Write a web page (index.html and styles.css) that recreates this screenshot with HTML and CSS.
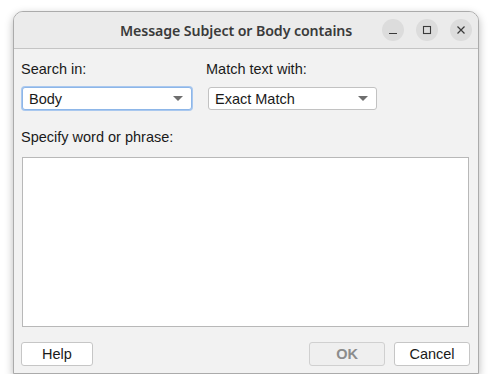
FILE: index.html
```html
<!DOCTYPE html>
<html lang="en">
<head>
  <meta charset="UTF-8"/>
  <meta name="viewport" content="width=device-width, initial-scale=1.0"/>
  <title>Message Subject or Body contains</title>
  <link rel="stylesheet" href="styles.css">
</head>
<body>
  <div class="window">
    <header class="titlebar">
      <span class="title">Message Subject or Body contains</span>
      <div class="wm-buttons">
        <button class="wm-btn" aria-label="Minimize">
          <svg width="10" height="10" viewBox="0 0 10 10"><path d="M1 8.5h8" stroke="#3a3a3a" stroke-width="1.2"/></svg>
        </button>
        <button class="wm-btn" aria-label="Maximize">
          <svg width="10" height="10" viewBox="0 0 10 10"><rect x="1.5" y="1.5" width="7" height="7" fill="none" stroke="#3a3a3a" stroke-width="1.1"/></svg>
        </button>
        <button class="wm-btn" aria-label="Close">
          <svg width="10" height="10" viewBox="0 0 10 10"><path d="M1.5 1.5l7 7M8.5 1.5l-7 7" stroke="#3a3a3a" stroke-width="1.2"/></svg>
        </button>
      </div>
    </header>

    <main class="content">
      <div class="row">
        <div class="field field-search">
          <label>Search in:</label>
          <div class="select focused"><span>Body</span><i class="arrow"></i></div>
        </div>
        <div class="field field-match">
          <label>Match text with:</label>
          <div class="select"><span>Exact Match</span><i class="arrow"></i></div>
        </div>
      </div>

      <label class="phrase-label">Specify word or phrase:</label>
      <textarea class="phrase"></textarea>

      <div class="buttons">
        <button class="btn btn-help">Help</button>
        <div class="spacer"></div>
        <button class="btn btn-ok" disabled>OK</button>
        <button class="btn btn-cancel">Cancel</button>
      </div>
    </main>
  </div>
</body>
</html>
```

FILE: styles.css
```css
*{box-sizing:border-box;margin:0;padding:0;}
body{background:#fff;padding:11px 0 0 13px;font-family:'Liberation Sans',Arial,sans-serif;font-size:14.5px;color:#1a1a1a;}
.window{width:466px;height:363px;background:#f2f2f2;border:1px solid #ababab;border-radius:10px 10px 0 0;box-shadow:0 3px 8px rgba(0,0,0,0.28);display:flex;flex-direction:column;overflow:hidden;}

.titlebar{height:37px;background:#ebebeb;border-bottom:1px solid #c4c4c4;display:flex;align-items:center;padding:0 6px 0 106px;flex-shrink:0;}
.title{font-family:'Noto Sans',sans-serif;font-weight:600;font-size:14.2px;color:#3a3a3a;letter-spacing:-0.1px;}
.wm-buttons{margin-left:auto;display:flex;gap:12px;}
.wm-btn{width:22px;height:22px;border-radius:50%;border:none;background:#dcdcdc;display:flex;align-items:center;justify-content:center;}

.content{padding:12px 7px 0 7px;display:flex;flex-direction:column;flex:1;}
.row{display:flex;}
.field{display:flex;flex-direction:column;}
.field label{line-height:16px;}
.field-search{width:185px;}
.select{margin-top:10px;height:23px;background:#fff;border:1px solid #c2c2c2;border-radius:3px;display:flex;align-items:center;padding:0 8px 0 6px;font-size:14.5px;}
.select span{flex:1;}
.field-search .select{width:170px;margin-left:1px;}
.field-match .select{width:169px;margin-left:2px;}
.select.focused{border-color:#8db6e8;box-shadow:0 0 0 1px #a9c8ef;}
.arrow{width:0;height:0;border-left:5px solid transparent;border-right:5px solid transparent;border-top:5px solid #6e6e6e;}

.phrase-label{margin-top:19px;line-height:16px;}
.phrase{margin:12px 1px 0 1px;width:447px;height:170px;border:1px solid #b8b8b8;background:#fff;resize:none;}

.buttons{display:flex;margin-top:15px;}
.spacer{flex:1;}
.btn{height:24px;background:#fff;border:1px solid #c6c6c6;border-radius:3px;font-family:'Liberation Sans',Arial,sans-serif;font-size:14.5px;color:#1a1a1a;}
.btn-help{width:72px;}
.btn-ok{width:76px;background:#efefef;border-color:#d0d0d0;color:#8c8c8c;font-weight:bold;margin-right:9px;}
.btn-cancel{width:76px;margin-right:1px;}
```
